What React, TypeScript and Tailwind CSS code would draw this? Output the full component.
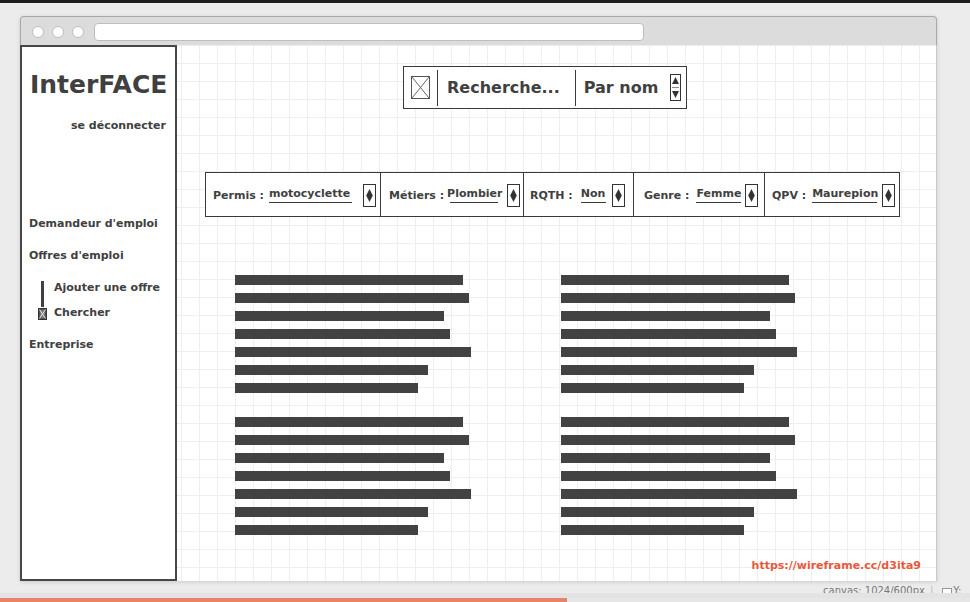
import React from "react";

function FieldSpinner() {
  return (
    <svg width="13" height="23" viewBox="0 0 13 23" className="shrink-0">
      <rect x="0.5" y="0.5" width="12" height="22" fill="white" stroke="#333" />
      <polygon points="6.5,5 9.8,11.5 6.5,18 3.2,11.5" fill="#333" />
    </svg>
  );
}

function SearchSpinner() {
  return (
    <svg width="11" height="27" viewBox="0 0 11 27" className="shrink-0">
      <rect x="0.5" y="0.5" width="10" height="26" fill="white" stroke="#333" />
      <polygon points="2,10 5.5,3 9,10" fill="#333" />
      <polygon points="2,17 5.5,24 9,17" fill="#333" />
      <line x1="2" y1="13.5" x2="9" y2="13.5" stroke="#888" strokeWidth="1" />
    </svg>
  );
}

function ImagePlaceholder() {
  return (
    <svg width="19" height="23" viewBox="0 0 19 23" className="shrink-0">
      <rect x="0.5" y="0.5" width="18" height="22" fill="white" stroke="#555" />
      <line x1="1" y1="1" x2="18" y2="22" stroke="#666" strokeWidth="1" />
      <line x1="18" y1="1" x2="1" y2="22" stroke="#666" strokeWidth="1" />
    </svg>
  );
}

function TinyBox() {
  return (
    <svg width="9" height="12" viewBox="0 0 9 12" className="shrink-0 mt-[1px]">
      <rect x="0.75" y="0.75" width="7.5" height="10.5" fill="#777" stroke="#333" strokeWidth="1.5" />
      <line x1="1.5" y1="1.5" x2="7.5" y2="10.5" stroke="#e5e5e5" strokeWidth="1" />
      <line x1="7.5" y1="1.5" x2="1.5" y2="10.5" stroke="#e5e5e5" strokeWidth="1" />
    </svg>
  );
}

const cells = [
  { w: "w-[175px] border-r", pl: "pl-[7px]", label: "Permis :", value: "motocyclette", vm: "ml-[5px]", ul: "ml-0 w-[83px]", sm: "ml-[11px]" },
  { w: "w-[143px] border-r", pl: "pl-[8px]", label: "Métiers :", value: "Plombier", vm: "ml-[3px]", ul: "ml-[3px] w-[48px]", sm: "ml-[4px]" },
  { w: "w-[110px] border-r", pl: "pl-[6px]", label: "RQTH :", value: "Non", vm: "ml-[8px]", ul: "ml-0 w-[25px]", sm: "ml-[6px]" },
  { w: "w-[131px] border-r", pl: "pl-[10px]", label: "Genre :", value: "Femme", vm: "ml-[7px]", ul: "ml-0 w-[45px]", sm: "ml-[4px]" },
  { w: "w-[134px]", pl: "pl-[7px]", label: "QPV :", value: "Maurepion", vm: "ml-[6px]", ul: "ml-0 w-[65px]", sm: "ml-[4px]" },
];

const barWidths = ["w-[228px]", "w-[234px]", "w-[209px]", "w-[215px]", "w-[236px]", "w-[193px]", "w-[183px]"];

function BarGroup() {
  return (
    <div className="flex flex-col gap-[8px]">
      {barWidths.map((w, i) => (
        <div key={i} className={`${w} h-[10px] bg-[#424242]`} />
      ))}
    </div>
  );
}

function BarColumn() {
  return (
    <div className="w-[326px] flex flex-col">
      <BarGroup />
      <div className="mt-[24px]">
        <BarGroup />
      </div>
    </div>
  );
}

export default function App() {
  return (
    <div className="w-[970px] h-[602px] overflow-hidden bg-[#ececec] flex flex-col font-['DejaVu_Sans',sans-serif] text-[#404040]">
      <div className="h-[3px] bg-[#1e1e1e] shrink-0" />
      <div className="ml-[20px] mt-[13px] w-[917px] h-[565px] flex flex-col shrink-0 rounded-t-[4px] shadow-[0_1px_4px_rgba(0,0,0,0.15)]">
        {/* title bar */}
        <div className="h-[29px] shrink-0 bg-[#dcdcdc] border-t border-x border-[#a8a8a8] rounded-t-[4px] flex items-center pt-[2px] pl-[11px]">
          <div className="w-[12px] h-[12px] rounded-full bg-white border border-[#bdbdbd]" />
          <div className="w-[12px] h-[12px] rounded-full bg-white border border-[#bdbdbd] ml-[8px]" />
          <div className="w-[12px] h-[12px] rounded-full bg-white border border-[#bdbdbd] ml-[8px]" />
          <div className="w-[550px] h-[18px] rounded-[4px] bg-white border border-[#bdbdbd] ml-[10px]" />
        </div>
        {/* body */}
        <div className="flex flex-row h-[536px]">
          <aside className="w-[157px] h-full shrink-0 bg-white border-2 border-[#474747] flex flex-col font-bold">
            <div className="pt-[23px] pl-[8px] text-[25px] leading-[29px] whitespace-nowrap">InterFACE</div>
            <div className="mt-[20px] pr-[9px] text-right text-[11px] leading-[13px] whitespace-nowrap">se déconnecter</div>
            <nav className="pl-[7px] flex flex-col text-[11px] leading-[13px] whitespace-nowrap">
              <div className="mt-[85px]">Demandeur d'emploi</div>
              <div className="mt-[19px]">Offres d'emploi</div>
              <div className="mt-[19px] flex flex-row">
                <div className="ml-[9px] w-[9px] flex flex-col items-center">
                  <div className="w-[3px] h-[26px] bg-[#404040]" />
                  <TinyBox />
                </div>
                <div className="ml-[7px] flex flex-col gap-[12px]">
                  <div>Ajouter une offre</div>
                  <div>Chercher</div>
                </div>
              </div>
              <div className="mt-[18px]">Entreprise</div>
            </nav>
          </aside>
          <main className="w-[760px] h-full flex flex-col bg-white border-r border-[#c9c9c9] [background-image:linear-gradient(to_right,#eeeeee_1px,transparent_1px),linear-gradient(to_bottom,#eeeeee_1px,transparent_1px)] [background-size:18px_18px] [background-position:4px_0px]">
            {/* search */}
            <div className="mt-[21px] ml-[226px] w-[284px] h-[43px] bg-white border border-[#3a3a3a] flex items-center pl-[7px] font-bold">
              <ImagePlaceholder />
              <div className="ml-[7px] w-px h-[36px] bg-[#3a3a3a]" />
              <div className="ml-[9px] text-[16px] leading-[20px] whitespace-nowrap">Recherche...</div>
              <div className="ml-[15px] w-px h-[36px] bg-[#3a3a3a]" />
              <div className="ml-[8px] text-[16px] leading-[20px] whitespace-nowrap">Par nom</div>
              <div className="ml-[12px]">
                <SearchSpinner />
              </div>
            </div>
            {/* filters */}
            <div className="mt-[63px] ml-[28px] w-[695px] h-[45px] bg-white border border-[#3a3a3a] flex flex-row font-bold text-[11px] leading-[13px]">
              {cells.map((c) => (
                <div key={c.label} className={`${c.w} ${c.pl} h-full border-[#3a3a3a] flex items-center whitespace-nowrap`}>
                  <div className="mt-[2px]">{c.label}</div>
                  <div className={`${c.vm} flex flex-col items-start`}>
                    <div>{c.value}</div>
                    <div className={`${c.ul} h-px mt-[2px] bg-[#3a3a3a]`} />
                  </div>
                  <div className={`${c.sm} mt-[1px]`}>
                    <FieldSpinner />
                  </div>
                </div>
              ))}
            </div>
            {/* bars */}
            <div className="mt-[58px] ml-[58px] flex flex-row">
              <BarColumn />
              <BarColumn />
            </div>
            <div className="mt-auto self-end pr-[15px] pb-[9px] text-[11px] leading-[13px] font-bold text-[#e8583c] whitespace-nowrap">
              https://wireframe.cc/d3ita9
            </div>
          </main>
        </div>
      </div>
      {/* status */}
      <div className="mt-[4px] h-[8px] overflow-hidden flex flex-row items-start pl-[823px] text-[10px] leading-[12px] text-[#777] whitespace-nowrap shrink-0">
        <span>canvas: 1024/600px</span>
        <span className="ml-[5px] text-[#bbb]">|</span>
        <span className="ml-[9px] inline-block w-[10px] h-[9px] mt-[3px] border border-[#999] bg-white" />
        <span className="ml-[1px]">Y:</span>
      </div>
      <div className="h-[5px] bg-[#e3e3e3] shrink-0" />
      <div className="h-[4px] flex flex-row shrink-0 bg-[#e6e6e6]">
        <div className="w-[567px] h-full bg-[#e8836b]" />
      </div>
    </div>
  );
}
